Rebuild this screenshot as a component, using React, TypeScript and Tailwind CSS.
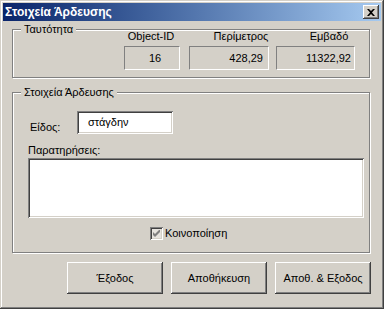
const raised =
  "bg-[#d4d0c8] shadow-[inset_-1px_-1px_#404040,inset_1px_1px_#ffffff,inset_-2px_-2px_#808080,inset_2px_2px_#d4d0c8]";
const sunken =
  "bg-white shadow-[inset_1px_1px_#808080,inset_-1px_-1px_#ffffff,inset_2px_2px_#404040,inset_-2px_-2px_#d4d0c8]";
const etched =
  "relative border border-[#808080] shadow-[inset_1px_1px_#ffffff,1px_1px_#ffffff]";
const staticEdge =
  "bg-[#d4d0c8] border border-t-[#808080] border-l-[#808080] border-b-white border-r-white";

function Legend({ text }: { text: string }) {
  return (
    <span className="absolute left-[8px] top-[-7px] bg-[#d4d0c8] px-[3px] leading-[13px]">
      {text}
    </span>
  );
}

function Button({ label }: { label: string }) {
  return (
    <button className={`${raised} w-[96px] h-[32px] flex items-center justify-center`}>
      {label}
    </button>
  );
}

export default function App() {
  return (
    <div className="w-[384px] h-[309px] bg-[#d4d0c8] p-[3px] flex flex-col text-[11px] leading-[13px] text-black font-['Liberation_Sans',Arial,sans-serif] shadow-[inset_-1px_-1px_#404040,inset_1px_1px_#d4d0c8,inset_-2px_-2px_#808080,inset_2px_2px_#ffffff]">
      {/* title bar */}
      <div className="h-[18px] flex items-center justify-between px-[2px] bg-linear-to-r from-[#0a246a] to-[#a6caf0]">
        <span className="font-bold text-white text-[12px]">Στοιχεία Άρδευσης</span>
        <div className={`${raised} w-[16px] h-[14px] flex items-center justify-center`}>
          <svg width="8" height="7" viewBox="0 0 8 7">
            <path d="M0 0h2l2 2 2-2h2L5 3.5 8 7H6L4 5 2 7H0l3-3.5z" fill="#000" />
          </svg>
        </div>
      </div>

      {/* Ταυτότητα */}
      <div className={`${etched} mt-[8px] ml-[9px] w-[358px] h-[49px]`}>
        <Legend text="Ταυτότητα" />
        <div className="flex ml-[108px] h-[13px]">
          <span className="w-[60px] text-center">Object-ID</span>
          <span className="w-[60px] ml-[30px] text-center">Περίμετρος</span>
          <span className="w-[60px] ml-[28px] text-center">Εμβαδό</span>
        </div>
        <div className="flex ml-[111px] mt-[3px]">
          <div className={`${staticEdge} w-[56px] h-[24px] flex items-center justify-center pl-[6px]`}>16</div>
          <div className={`${staticEdge} w-[80px] h-[24px] ml-[9px] flex items-center justify-end pr-[5px]`}>428,29</div>
          <div className={`${staticEdge} w-[79px] h-[24px] ml-[7px] flex items-center justify-end pr-[3px]`}>11322,92</div>
        </div>
      </div>

      {/* Στοιχεία Άρδευσης */}
      <div className={`${etched} mt-[14px] ml-[9px] w-[358px] h-[161px]`}>
        <Legend text="Στοιχεία Άρδευσης" />
        <div className="flex items-end mt-[18px]">
          <span className="w-[64px] pl-[17px]">Είδος:</span>
          <div className={`${sunken} w-[96px] h-[23px] flex items-center pl-[11px]`}>στάγδην</div>
        </div>
        <div className="mt-[10px] ml-[15px]">Παρατηρήσεις:</div>
        <div className={`${sunken} mt-[1px] ml-[15px] w-[336px] h-[60px]`} />
        <div className="flex items-center mt-[9px] ml-[137px]">
          <div className="w-[13px] h-[13px] bg-[#e6e3de] shadow-[inset_1px_1px_#808080,inset_-1px_-1px_#ffffff,inset_2px_2px_#404040,inset_-2px_-2px_#d4d0c8] flex items-center justify-center">
            <svg width="7" height="7" viewBox="0 0 7 7">
              <path d="M0 2L2 4L7 -1V2L2 7L0 5Z" fill="#808080" />
            </svg>
          </div>
          <span className="ml-[2px]">Κοινοποίηση</span>
        </div>
      </div>

      {/* buttons */}
      <div className="flex gap-[8px] mt-[9px] ml-[64px]">
        <Button label="Έξοδος" />
        <Button label="Αποθήκευση" />
        <Button label="Αποθ. & Εξοδος" />
      </div>
    </div>
  );
}
